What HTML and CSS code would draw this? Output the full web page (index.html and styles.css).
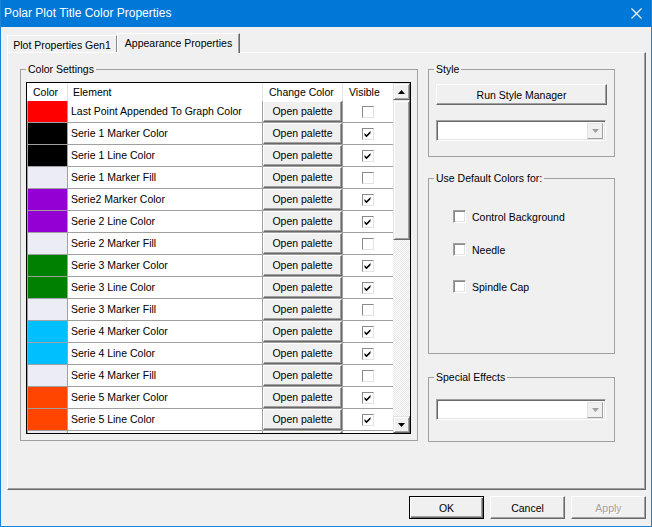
FILE: index.html
```html
<!DOCTYPE html>
<html>
<head>
<meta charset="utf-8">
<link rel="stylesheet" href="styles.css">
</head>
<body>
<div class="window">
  <div class="titlebar">
    <span class="title">Polar Plot Title Color Properties</span>
    <svg class="close" width="11" height="11" viewBox="0 0 11 11"><path d="M0.5 0.5 L10.5 10.5 M10.5 0.5 L0.5 10.5" stroke="#fff" stroke-width="1.1" fill="none"/></svg>
  </div>
  <div class="client">
    <div class="tabs">
      <div class="tab">Plot Properties Gen1</div>
      <div class="tab active">Appearance Properties</div>
    </div>
    <div class="panel">
      <div class="group color-group">
        <div class="legend">Color Settings</div>
        <div class="list">
          <div class="grid">
            <div class="hdr">
              <div class="c1">Color</div>
              <div class="c2 hpad">Element</div>
              <div class="c3">Change Color</div>
              <div class="c4">Visible</div>
            </div>
            <div class="row"><div class="c1" style="background:#ff0000"></div><div class="c2">Last Point Appended To Graph Color</div><div class="c3"><div class="obtn">Open palette</div></div><div class="c4"><span class="cbx"></span></div></div>
            <div class="row"><div class="c1" style="background:#000000"></div><div class="c2">Serie 1 Marker Color</div><div class="c3"><div class="obtn">Open palette</div></div><div class="c4"><span class="cbx"><svg class="chk" viewBox="0 0 8 8"><path d="M0.5 3 L2.5 5 L6.5 1 L6.5 3.2 L2.5 7.2 L0.5 5.2 Z"/></svg></span></div></div>
            <div class="row"><div class="c1" style="background:#000000"></div><div class="c2">Serie 1 Line Color</div><div class="c3"><div class="obtn">Open palette</div></div><div class="c4"><span class="cbx"><svg class="chk" viewBox="0 0 8 8"><path d="M0.5 3 L2.5 5 L6.5 1 L6.5 3.2 L2.5 7.2 L0.5 5.2 Z"/></svg></span></div></div>
            <div class="row"><div class="c1" style="background:#ececf4"></div><div class="c2">Serie 1 Marker Fill</div><div class="c3"><div class="obtn">Open palette</div></div><div class="c4"><span class="cbx"></span></div></div>
            <div class="row"><div class="c1" style="background:#9400d3"></div><div class="c2">Serie2 Marker Color</div><div class="c3"><div class="obtn">Open palette</div></div><div class="c4"><span class="cbx"><svg class="chk" viewBox="0 0 8 8"><path d="M0.5 3 L2.5 5 L6.5 1 L6.5 3.2 L2.5 7.2 L0.5 5.2 Z"/></svg></span></div></div>
            <div class="row"><div class="c1" style="background:#9400d3"></div><div class="c2">Serie 2 Line Color</div><div class="c3"><div class="obtn">Open palette</div></div><div class="c4"><span class="cbx"><svg class="chk" viewBox="0 0 8 8"><path d="M0.5 3 L2.5 5 L6.5 1 L6.5 3.2 L2.5 7.2 L0.5 5.2 Z"/></svg></span></div></div>
            <div class="row"><div class="c1" style="background:#ececf4"></div><div class="c2">Serie 2 Marker Fill</div><div class="c3"><div class="obtn">Open palette</div></div><div class="c4"><span class="cbx"></span></div></div>
            <div class="row"><div class="c1" style="background:#008000"></div><div class="c2">Serie 3 Marker Color</div><div class="c3"><div class="obtn">Open palette</div></div><div class="c4"><span class="cbx"><svg class="chk" viewBox="0 0 8 8"><path d="M0.5 3 L2.5 5 L6.5 1 L6.5 3.2 L2.5 7.2 L0.5 5.2 Z"/></svg></span></div></div>
            <div class="row"><div class="c1" style="background:#008000"></div><div class="c2">Serie 3 Line Color</div><div class="c3"><div class="obtn">Open palette</div></div><div class="c4"><span class="cbx"><svg class="chk" viewBox="0 0 8 8"><path d="M0.5 3 L2.5 5 L6.5 1 L6.5 3.2 L2.5 7.2 L0.5 5.2 Z"/></svg></span></div></div>
            <div class="row"><div class="c1" style="background:#ececf4"></div><div class="c2">Serie 3 Marker Fill</div><div class="c3"><div class="obtn">Open palette</div></div><div class="c4"><span class="cbx"></span></div></div>
            <div class="row"><div class="c1" style="background:#00bfff"></div><div class="c2">Serie 4 Marker Color</div><div class="c3"><div class="obtn">Open palette</div></div><div class="c4"><span class="cbx"><svg class="chk" viewBox="0 0 8 8"><path d="M0.5 3 L2.5 5 L6.5 1 L6.5 3.2 L2.5 7.2 L0.5 5.2 Z"/></svg></span></div></div>
            <div class="row"><div class="c1" style="background:#00bfff"></div><div class="c2">Serie 4 Line Color</div><div class="c3"><div class="obtn">Open palette</div></div><div class="c4"><span class="cbx"><svg class="chk" viewBox="0 0 8 8"><path d="M0.5 3 L2.5 5 L6.5 1 L6.5 3.2 L2.5 7.2 L0.5 5.2 Z"/></svg></span></div></div>
            <div class="row"><div class="c1" style="background:#ececf4"></div><div class="c2">Serie 4 Marker Fill</div><div class="c3"><div class="obtn">Open palette</div></div><div class="c4"><span class="cbx"></span></div></div>
            <div class="row"><div class="c1" style="background:#ff4500"></div><div class="c2">Serie 5 Marker Color</div><div class="c3"><div class="obtn">Open palette</div></div><div class="c4"><span class="cbx"><svg class="chk" viewBox="0 0 8 8"><path d="M0.5 3 L2.5 5 L6.5 1 L6.5 3.2 L2.5 7.2 L0.5 5.2 Z"/></svg></span></div></div>
            <div class="row"><div class="c1" style="background:#ff4500"></div><div class="c2">Serie 5 Line Color</div><div class="c3"><div class="obtn">Open palette</div></div><div class="c4"><span class="cbx"><svg class="chk" viewBox="0 0 8 8"><path d="M0.5 3 L2.5 5 L6.5 1 L6.5 3.2 L2.5 7.2 L0.5 5.2 Z"/></svg></span></div></div>
            <div class="row"><div class="c1" style="background:#ececf4"></div><div class="c2"></div><div class="c3"><div class="obtn"></div></div><div class="c4"></div></div>
          </div>
          <div class="sb">
            <div class="sbbtn"><svg width="7" height="4" viewBox="0 0 7 4"><path d="M3.5 0 L7 4 L0 4 Z"/></svg></div>
            <div class="sbthumb"></div>
            <div class="sbtrack"></div>
            <div class="sbbtn"><svg width="7" height="4" viewBox="0 0 7 4"><path d="M0 0 L7 0 L3.5 4 Z"/></svg></div>
          </div>
        </div>
      </div>
      <div class="rightcol">
        <div class="group style-group">
          <div class="legend">Style</div>
          <div class="btn wide">Run Style Manager</div>
          <div class="combo combo-style"><div class="dd"><svg width="7" height="4" viewBox="0 0 7 4"><path d="M0 0 L7 0 L3.5 4 Z"/></svg></div></div>
        </div>
        <div class="group default-group">
          <div class="legend">Use Default Colors for:</div>
          <div class="opt first"><span class="cb"></span><span>Control Background</span></div>
          <div class="opt"><span class="cb"></span><span>Needle</span></div>
          <div class="opt last"><span class="cb"></span><span>Spindle Cap</span></div>
        </div>
        <div class="group effects-group">
          <div class="legend">Special Effects</div>
          <div class="combo combo-fx"><div class="dd"><svg width="7" height="4" viewBox="0 0 7 4"><path d="M0 0 L7 0 L3.5 4 Z"/></svg></div></div>
        </div>
      </div>
    </div>
    <div class="buttons">
      <div class="btn dlg default">OK</div>
      <div class="btn dlg">Cancel</div>
      <div class="btn dlg disabled">Apply</div>
    </div>
  </div>
</div>
</body>
</html>
```
FILE: styles.css
```css
* { box-sizing: border-box; }
body {
  margin: 0;
  font-family: "Liberation Sans", Arial, sans-serif;
  font-size: 10.5px;
  color: #000;
  background: #f0f0f0;
}
.window {
  width: 652px;
  height: 527px;
  border: 1px solid #1883d7;
  border-top: none;
  background: #f0f0f0;
  display: flex;
  flex-direction: column;
}
.titlebar {
  height: 27px;
  flex: none;
  background: #0078d7;
  color: #fff;
  font-size: 12px;
  display: flex;
  align-items: center;
  justify-content: space-between;
  padding: 0 9px 1px 3px;
}
.close { display: block; }
.client {
  flex: 1;
  padding: 6px 5px 0 6px;
  display: flex;
  flex-direction: column;
}
.tabs {
  display: flex;
  align-items: flex-end;
  height: 19px;
}
.tab {
  height: 17px;
  width: 110px;
  border: 1px solid;
  border-color: #fff #8a8a8a transparent #fff;
  border-bottom: none;
  display: flex;
  align-items: center;
  justify-content: center;
  padding-top: 1px;
  background: #f0f0f0;
}
.tab.active {
  height: 20px;
  width: 123px;
  margin-bottom: -1px;
  position: relative;
  z-index: 1;
  border-right-color: #696969;
  box-shadow: inset -1px 0 #a0a0a0;
  align-items: flex-start;
  padding-top: 3px;
}
.panel {
  width: 639px;
  height: 438px;
  flex: none;
  border: 1px solid;
  border-color: #fff #696969 #696969 #fff;
  box-shadow: inset -1px -1px #a0a0a0;
  display: flex;
  align-items: flex-start;
  padding: 16px 0 0 12px;
}
.group {
  border: 1px solid #a0a0a0;
  display: flex;
  flex-direction: column;
  align-items: flex-start;
}
.legend {
  margin: -7px 0 0 5px;
  padding: 0 2px;
  height: 13px;
  line-height: 13px;
  background: #f0f0f0;
  white-space: nowrap;
}
.color-group { width: 398px; height: 372px; }
.list {
  margin: 6px 0 0 5px;
  width: 385px;
  height: 352px;
  border: 1px solid #000;
  background: #fff;
  display: flex;
}
.grid {
  width: 366px;
  height: 350px;
  overflow: hidden;
  display: flex;
  flex-direction: column;
}
.c1 { width: 41px; flex: none; }
.c2 { width: 195px; flex: none; }
.c3 { width: 80px; flex: none; }
.c4 { width: 50px; flex: none; }
.hdr {
  display: flex;
  height: 18px;
  flex: none;
}
.hdr > div {
  line-height: 18px;
  padding-left: 6px;
  border-right: 1px solid #e5e5e5;
  white-space: nowrap;
}
.hdr > .hpad { padding-left: 5px; }
.hdr > .c4 { border-right: none; }
.row {
  display: flex;
  height: 22px;
  flex: none;
  border-bottom: 1px solid #a0a0a0;
}
.row > div {
  border-right: 1px solid #a0a0a0;
  height: 21px;
}
.row > .c1 { border-left: 1px solid #a0a0a0; }
.row > .c2 {
  padding-left: 3px;
  line-height: 21px;
  white-space: nowrap;
}
.row > .c4 {
  border-right: none;
  display: flex;
  align-items: center;
  justify-content: center;
  padding-right: 1px;
}
.obtn {
  width: 79px;
  height: 21px;
  background: #f0f0f0;
  border: 1px solid;
  border-color: #fff #696969 #696969 #fff;
  box-shadow: inset -1px -1px #a0a0a0;
  text-align: center;
  line-height: 19px;
  white-space: nowrap;
}
.cbx {
  width: 12px;
  height: 12px;
  background: #fff;
  border: 1px solid;
  border-color: #8a8a8a #e3e3e3 #e3e3e3 #8a8a8a;
  display: flex;
  align-items: center;
  justify-content: center;
}
.chk { width: 8px; height: 8px; display: block; }
.chk path { fill: #000; }
.sb {
  width: 17px;
  height: 350px;
  display: flex;
  flex-direction: column;
  background: repeating-conic-gradient(#ffffff 0 25%, #e8e8e8 0 50%) 0 0 / 2px 2px;
}
.sbbtn, .sbthumb {
  background: #f0f0f0;
  border: 1px solid;
  border-color: #e3e3e3 #696969 #696969 #e3e3e3;
  box-shadow: inset 1px 1px #fff, inset -1px -1px #a0a0a0;
}
.sbbtn {
  height: 17px;
  flex: none;
  display: flex;
  align-items: center;
  justify-content: center;
}
.sbbtn svg path { fill: #000; }
.sbthumb { height: 140px; flex: none; }
.sbtrack { flex: 1; }
.rightcol {
  margin-left: 10px;
  width: 187px;
  display: flex;
  flex-direction: column;
}
.rightcol .group { width: 187px; }
.style-group { height: 88px; }
.default-group { height: 176px; margin-top: 21px; }
.effects-group { height: 65px; margin-top: 23px; }
.btn {
  background: #f0f0f0;
  border: 1px solid;
  border-color: #fff #696969 #696969 #fff;
  box-shadow: inset -1px -1px #a0a0a0;
  display: flex;
  align-items: center;
  justify-content: center;
  white-space: nowrap;
}
.btn.wide {
  width: 171px;
  height: 21px;
  margin: 8px 0 0 7px;
}
.combo {
  width: 170px;
  height: 21px;
  margin-left: 7px;
  background: #fff;
  border: 1px solid;
  border-color: #a0a0a0 #fff #fff #a0a0a0;
  box-shadow: inset 1px 1px #696969, inset -1px -1px #e3e3e3;
  display: flex;
  justify-content: flex-end;
  align-items: center;
  padding: 2px 2px 2px 0;
}
.combo-style { margin-top: 15px; }
.combo-fx { margin-top: 15px; }
.dd {
  width: 16px;
  height: 16px;
  background: #f0f0f0;
  border: 1px solid;
  border-color: #e3e3e3 #a0a0a0 #a0a0a0 #e3e3e3;
  display: flex;
  align-items: center;
  justify-content: center;
}
.dd svg path { fill: #a0a0a0; }
.opt {
  display: flex;
  align-items: center;
  height: 13px;
  margin-left: 24px;
  margin-top: 20px;
  gap: 6px;
  white-space: nowrap;
}
.opt.first { margin-top: 25px; }
.opt.last { margin-top: 24px; }
.cb {
  width: 13px;
  height: 13px;
  background: #fff;
  border: 1px solid;
  border-color: #a0a0a0 #fff #fff #a0a0a0;
  box-shadow: inset 1px 1px #8a8a8a, inset -1px -1px #e3e3e3;
  flex: none;
}
.buttons {
  display: flex;
  justify-content: flex-end;
  gap: 6px;
  margin-top: 6px;
}
.btn.dlg {
  width: 75px;
  height: 23px;
}
.btn.default {
  border-color: #000;
  box-shadow: inset 1px 1px #fff, inset -1px -1px #696969, inset -2px -2px #a0a0a0;
}
.btn.disabled {
  color: #a0a0a0;
  text-shadow: 1px 1px #fff;
}
```
